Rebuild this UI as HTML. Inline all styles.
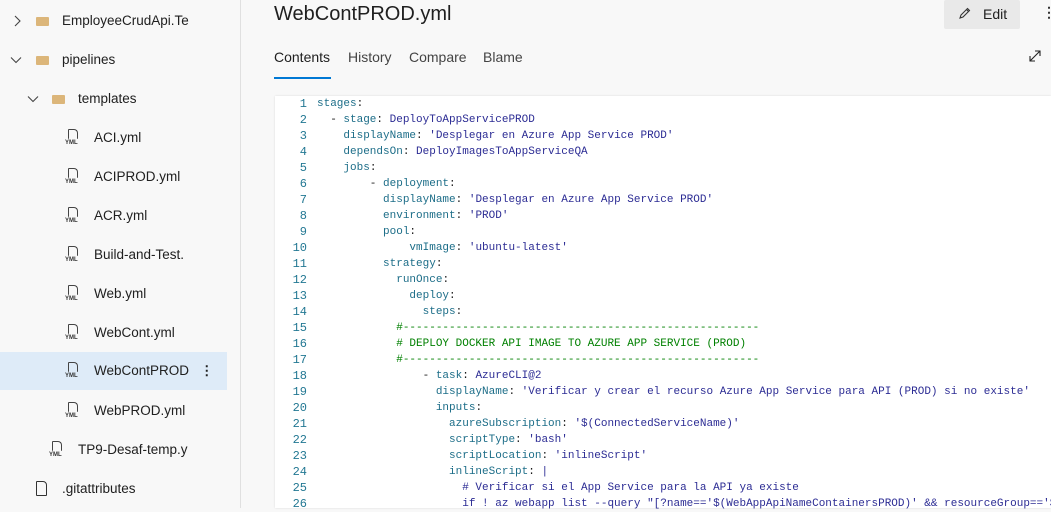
<!DOCTYPE html>
<html><head><meta charset="utf-8"><style>
body{margin:0;width:1051px;height:508px;overflow:hidden;background:#f8f8f8;font-family:"Liberation Sans",sans-serif;position:relative}
.side{position:absolute;left:0;top:0;width:240px;height:508px;border-right:1px solid #e0e0e0;background:#f8f8f8}
.row{position:absolute;left:0;width:227px;height:38px;font-size:13.5px;color:#202020}
.row span.t{position:absolute;top:11px}
.sel{background:#deebf8}
.chev{position:absolute;top:13px}
.fold{position:absolute;top:15px;width:13px;height:9px;background:#dcb67a;border-radius:1px}
.yml{position:absolute;top:10px;font-size:6px;font-weight:bold;color:#333;line-height:6px}
.yml:before{content:"";display:block;width:8px;height:9px;border:1px solid #444;border-radius:1px 4px 1px 1px;margin:0 0 1px 3px;border-bottom:none}
.title{position:absolute;left:274px;top:3px;font-size:20px;color:#202020}
.tabs{position:absolute;top:49px;font-size:14px;color:#444}
.edit{position:absolute;left:944px;top:0;width:76px;height:29px;background:#e9e9e9;border-radius:2px;font-size:14px;color:#202020}
.code{position:absolute;left:275px;top:96px;width:776px;height:412px;background:#fff;box-shadow:0 0 2px rgba(0,0,0,.12)}
pre{margin:0;position:absolute;top:0;font-family:"Liberation Mono",monospace;font-size:11px;line-height:16px}
.ln{left:0;width:32px;text-align:right;color:#237893;font-size:12px}
.src{left:42px;color:#1a1a1a}
.k{color:#1c6d88}.v{color:#2c2c94}.c{color:#008000}
</style></head><body>
<div class="side">
 <div class="row" style="top:2px"><svg class="chev" style="left:12px" width="10" height="12" viewBox="0 0 10 12"><path d="M3 1 L8 6 L3 11" fill="none" stroke="#444" stroke-width="1.1"/></svg><div class="fold" style="left:36px"></div><span class="t" style="left:62px">EmployeeCrudApi.Te</span></div>
 <div class="row" style="top:41px"><svg class="chev" style="left:10px;top:15px" width="12" height="8" viewBox="0 0 12 8"><path d="M1 1.5 L6 6.5 L11 1.5" fill="none" stroke="#444" stroke-width="1.1"/></svg><div class="fold" style="left:36px"></div><span class="t" style="left:62px">pipelines</span></div>
 <div class="row" style="top:80px"><svg class="chev" style="left:27px;top:15px" width="12" height="8" viewBox="0 0 12 8"><path d="M1 1.5 L6 6.5 L11 1.5" fill="none" stroke="#444" stroke-width="1.1"/></svg><div class="fold" style="left:52px"></div><span class="t" style="left:78px">templates</span></div>
 <div class="row" style="top:119px"><span class="yml" style="left:65px">YML</span><span class="t" style="left:94px">ACI.yml</span></div>
 <div class="row" style="top:158px"><span class="yml" style="left:65px">YML</span><span class="t" style="left:94px">ACIPROD.yml</span></div>
 <div class="row" style="top:197px"><span class="yml" style="left:65px">YML</span><span class="t" style="left:94px">ACR.yml</span></div>
 <div class="row" style="top:236px"><span class="yml" style="left:65px">YML</span><span class="t" style="left:94px">Build-and-Test.</span></div>
 <div class="row" style="top:275px"><span class="yml" style="left:65px">YML</span><span class="t" style="left:94px">Web.yml</span></div>
 <div class="row" style="top:314px"><span class="yml" style="left:65px">YML</span><span class="t" style="left:94px">WebCont.yml</span></div>
 <div class="row sel" style="top:352px"><span class="yml" style="left:65px">YML</span><span class="t" style="left:94px">WebContPROD</span><span class="t" style="left:200px;font-weight:bold">&#8942;</span></div>
 <div class="row" style="top:392px"><span class="yml" style="left:65px">YML</span><span class="t" style="left:94px">WebPROD.yml</span></div>
 <div class="row" style="top:431px"><span class="yml" style="left:49px">YML</span><span class="t" style="left:78px">TP9-Desaf-temp.y</span></div>
 <div class="row" style="top:470px"><div style="position:absolute;left:36px;top:11px;width:9px;height:13px;border:1px solid #333;border-radius:1px 4px 1px 1px"></div><span class="t" style="left:62px">.gitattributes</span></div>
</div>
<div class="title">WebContPROD.yml</div>
<div class="tabs" style="left:274px;color:#202020">Contents</div>
<div style="position:absolute;left:274px;top:77px;width:57px;height:2px;background:#0078d4"></div>
<div class="tabs" style="left:348px">History</div>
<div class="tabs" style="left:409px">Compare</div>
<div class="tabs" style="left:483px">Blame</div>
<div class="edit"><svg style="position:absolute;left:14px;top:7px" width="13" height="13" viewBox="0 0 13 13"><path d="M2 11 L3 8 L9.5 1.5 L11.5 3.5 L5 10 Z M8.5 2.5 L10.5 4.5" fill="none" stroke="#333" stroke-width="1.1"/></svg><span style="position:absolute;left:39px;top:6px">Edit</span></div>
<div style="position:absolute;left:1042px;top:4px;font-size:14px;font-weight:bold;color:#333">&#8942;</div>
<svg style="position:absolute;left:1029px;top:50px" width="12" height="12" viewBox="0 0 12 12"><path d="M1 11 L11 1 M6 1 H11 V6 M1 6 V11 H6" fill="none" stroke="#222" stroke-width="1.1"/></svg>
<div class="code">
<pre class="ln" style="top:0">1
2
3
4
5
6
7
8
9
10
11
12
13
14
15
16
17
18
19
20
21
22
23
24
25
26</pre>
<pre class="src"><span class="k">stages</span>:
  - <span class="k">stage</span>: <span class="v">DeployToAppServicePROD</span>
    <span class="k">displayName</span>: <span class="v">'Desplegar en Azure App Service PROD'</span>
    <span class="k">dependsOn</span>: <span class="v">DeployImagesToAppServiceQA</span>
    <span class="k">jobs</span>:
        - <span class="k">deployment</span>:
          <span class="k">displayName</span>: <span class="v">'Desplegar en Azure App Service PROD'</span>
          <span class="k">environment</span>: <span class="v">'PROD'</span>
          <span class="k">pool</span>:
              <span class="k">vmImage</span>: <span class="v">'ubuntu-latest'</span>
          <span class="k">strategy</span>:
            <span class="k">runOnce</span>:
              <span class="k">deploy</span>:
                <span class="k">steps</span>:
            <span class="c">#------------------------------------------------------</span>
            <span class="c"># DEPLOY DOCKER API IMAGE TO AZURE APP SERVICE (PROD)</span>
            <span class="c">#------------------------------------------------------</span>
                - <span class="k">task</span>: <span class="v">AzureCLI@2</span>
                  <span class="k">displayName</span>: <span class="v">'Verificar y crear el recurso Azure App Service para API (PROD) si no existe'</span>
                  <span class="k">inputs</span>:
                    <span class="k">azureSubscription</span>: <span class="v">'$(ConnectedServiceName)'</span>
                    <span class="k">scriptType</span>: <span class="v">'bash'</span>
                    <span class="k">scriptLocation</span>: <span class="v">'inlineScript'</span>
                    <span class="k">inlineScript</span>: <span class="v">|</span>
                      <span class="v"># Verificar si el App Service para la API ya existe</span>
                      <span class="v">if ! az webapp list --query "[?name=='$(WebAppApiNameContainersPROD)' &amp;&amp; resourceGroup=='$</span></pre>
</div>
</body></html>
